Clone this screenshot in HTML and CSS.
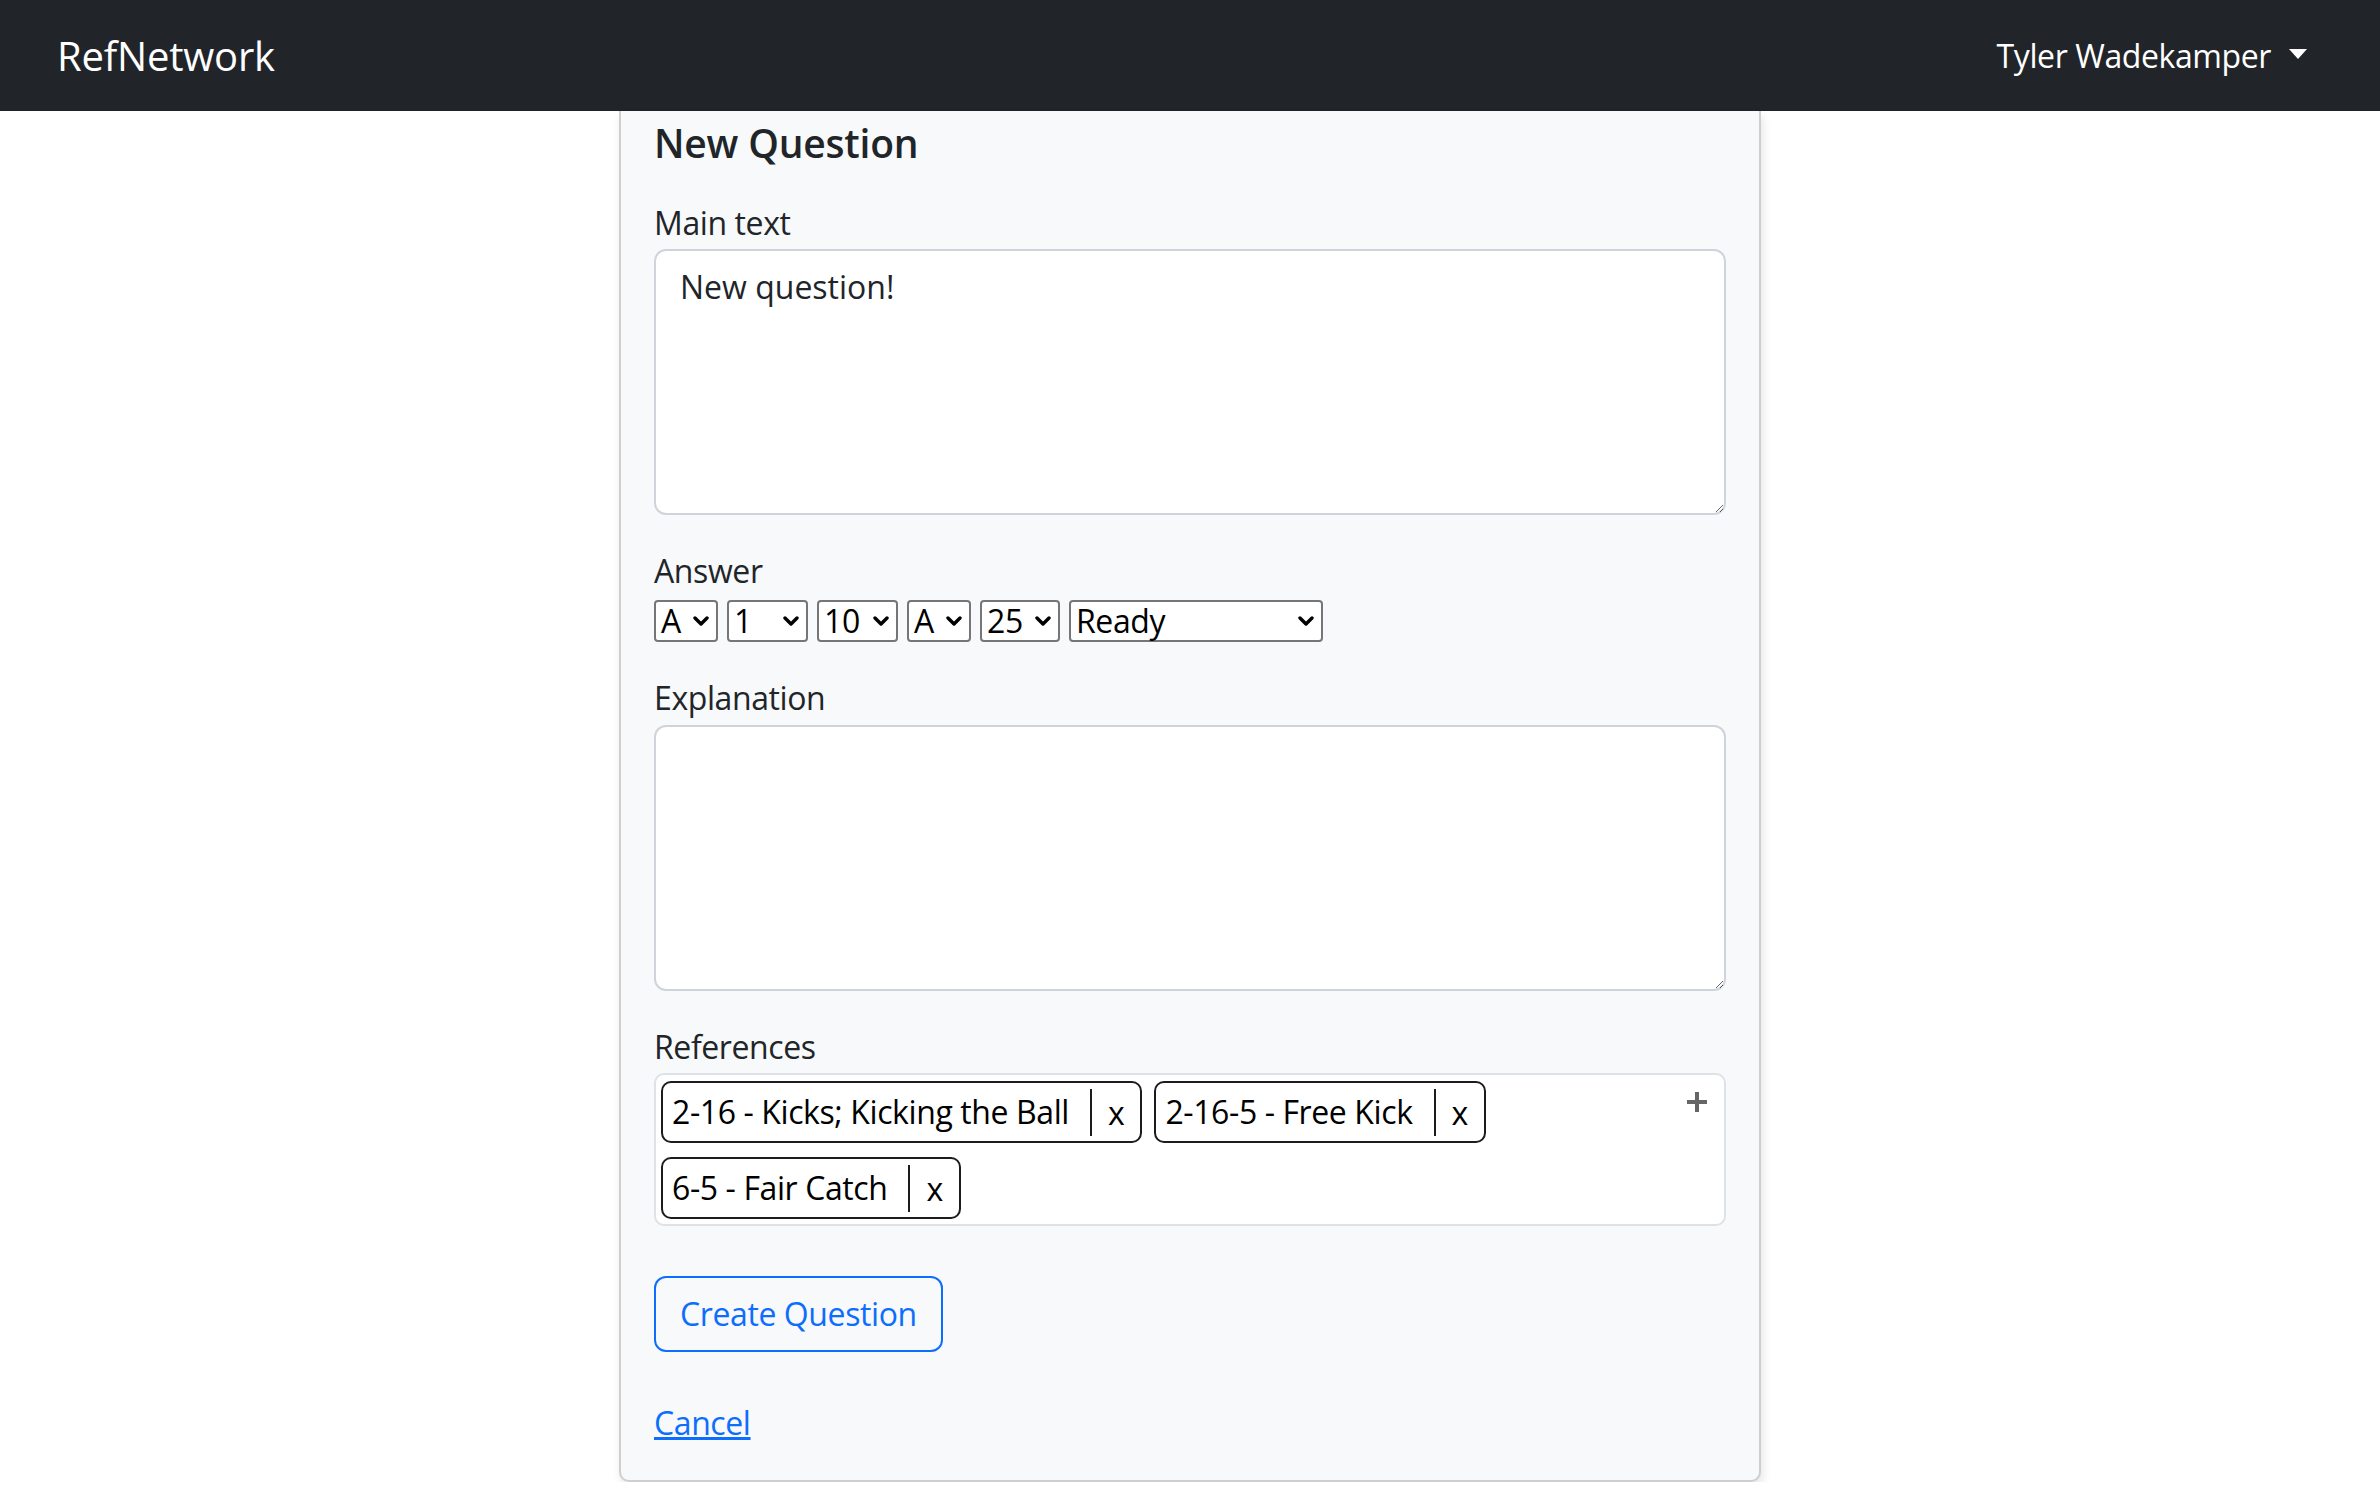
FILE: index.html
```html
<!DOCTYPE html>
<html lang="en">
<head>
<meta charset="utf-8">
<title>RefNetwork - New Question</title>
<link rel="stylesheet" href="styles.css">
</head>
<body>
<nav class="navbar">
  <a class="brand" href="#">RefNetwork</a>
  <div class="user">Tyler Wadekamper<span class="caret"></span></div>
</nav>
<main class="card">
  <h5 class="title">New Question</h5>
  <div class="group">
    <label class="lbl" for="main">Main text</label>
    <textarea id="main" class="field field-first">New question!</textarea>
  </div>
  <div class="group">
    <label class="lbl">Answer</label>
    <div class="selects">
      <div class="sel w-a"><span>A</span><svg class="chev" width="16" height="10" viewBox="0 0 16 10"><path d="M2 2 L8 8 L14 2" fill="none" stroke="#000" stroke-width="3.4" stroke-linecap="round" stroke-linejoin="round"/></svg></div>
      <div class="sel w-n"><span>1</span><svg class="chev" width="16" height="10" viewBox="0 0 16 10"><path d="M2 2 L8 8 L14 2" fill="none" stroke="#000" stroke-width="3.4" stroke-linecap="round" stroke-linejoin="round"/></svg></div>
      <div class="sel w-n"><span>10</span><svg class="chev" width="16" height="10" viewBox="0 0 16 10"><path d="M2 2 L8 8 L14 2" fill="none" stroke="#000" stroke-width="3.4" stroke-linecap="round" stroke-linejoin="round"/></svg></div>
      <div class="sel w-a"><span>A</span><svg class="chev" width="16" height="10" viewBox="0 0 16 10"><path d="M2 2 L8 8 L14 2" fill="none" stroke="#000" stroke-width="3.4" stroke-linecap="round" stroke-linejoin="round"/></svg></div>
      <div class="sel w-m"><span>25</span><svg class="chev" width="16" height="10" viewBox="0 0 16 10"><path d="M2 2 L8 8 L14 2" fill="none" stroke="#000" stroke-width="3.4" stroke-linecap="round" stroke-linejoin="round"/></svg></div>
      <div class="sel w-r"><span>Ready</span><svg class="chev" width="16" height="10" viewBox="0 0 16 10"><path d="M2 2 L8 8 L14 2" fill="none" stroke="#000" stroke-width="3.4" stroke-linecap="round" stroke-linejoin="round"/></svg></div>
    </div>
  </div>
  <div class="group">
    <label class="lbl" for="expl">Explanation</label>
    <textarea id="expl" class="field field-second"></textarea>
  </div>
  <div class="group group-refs">
    <label class="lbl">References</label>
    <div class="refs">
      <span class="tag"><span class="tag-text">2-16 - Kicks; Kicking the Ball</span><span class="tag-x">x</span></span>
      <span class="tag"><span class="tag-text">2-16-5 - Free Kick</span><span class="tag-x">x</span></span>
      <span class="tag"><span class="tag-text">6-5 - Fair Catch</span><span class="tag-x">x</span></span>
      <svg class="plus" width="20" height="20" viewBox="0 0 20 20"><path d="M10 0 V20 M0 10 H20" stroke="#666" stroke-width="4"/></svg>
    </div>
  </div>
  <button class="btn" type="button">Create Question</button>
  <p class="cancel"><a href="#">Cancel</a></p>
</main>
</body>
</html>
```
FILE: styles.css
```css
html, body {
  margin: 0;
  padding: 0;
}
body {
  font-family: "Open Sans", "Noto Sans", sans-serif;
  font-size: 32px;
  line-height: 1.5;
  letter-spacing: -0.4px;
  color: #212529;
  background: #fff;
}
.navbar {
  height: 111px;
  box-sizing: border-box;
  background: #212529;
  display: flex;
  align-items: center;
  justify-content: space-between;
  padding: 0 73px 0 57px;
}
.brand {
  font-size: 40px;
  line-height: 60px;
  letter-spacing: -0.2px;
  color: #fff;
  text-decoration: none;
}
.user {
  display: flex;
  align-items: center;
  color: #fff;
  font-size: 32px;
  line-height: 48px;
}
.caret {
  width: 0;
  height: 0;
  border-top: 10px solid #fff;
  border-left: 9.5px solid transparent;
  border-right: 9.5px solid transparent;
  margin-left: 18px;
  margin-top: -4px;
}
.card {
  width: 1142px;
  box-sizing: border-box;
  margin: 0 auto;
  background: #f8f9fa;
  border: 2px solid #cfcfcf;
  border-top: 0;
  border-radius: 0 0 10px 10px;
  padding: 8px 33px 33px;
  box-shadow: 2px 5px 10px rgba(0, 0, 0, 0.1);
}
.title {
  font-size: 39px;
  font-weight: 600;
  line-height: 48px;
  letter-spacing: -0.2px;
  margin: 0 0 32px;
  color: #212529;
}
.group {
  margin-bottom: 32px;
}
.lbl {
  display: block;
  line-height: 48px;
}
.field {
  display: block;
  width: 100%;
  height: 266px;
  box-sizing: border-box;
  border: 2px solid #ced4da;
  border-radius: 12px;
  padding: 12px 24px;
  font: inherit;
  line-height: 48px;
  color: #212529;
  background: #fff;
  resize: vertical;
  margin: 2px 0 0;
}
.field-second {
  margin-top: 3px;
}
.selects {
  display: flex;
  gap: 9px;
  margin-top: 5px;
}
.sel {
  display: flex;
  align-items: center;
  justify-content: space-between;
  height: 42px;
  box-sizing: border-box;
  border: 2px solid #767676;
  border-radius: 4px;
  background: #fff;
  padding: 0 7px 2px 5px;
  font-size: 32px;
  line-height: 37px;
  color: #000;
}
.chev {
  flex: none;
  margin-top: 2px;
}
.w-a { width: 64px; }
.w-n { width: 81px; }
.w-m { width: 80px; }
.w-r { width: 254px; }
.group-refs {
  margin-bottom: 50px;
}
.refs {
  position: relative;
  display: flex;
  flex-wrap: wrap;
  gap: 14px 12px;
  margin-top: 2px;
  border: 2px solid #dee2e6;
  border-radius: 10px;
  background: #fff;
  padding: 6px 60px 5px 5px;
}
.tag {
  display: inline-flex;
  align-items: center;
  border: 2px solid #1c1c1c;
  border-radius: 10px;
  background: #fff;
  padding: 5px 0;
  color: #000;
  line-height: 48px;
}
.tag-text {
  padding: 0 21px 0 9px;
  white-space: nowrap;
}
.tag-x {
  border-left: 2px solid #1c1c1c;
  padding: 0 16px;
  line-height: 47px;
}
.plus {
  position: absolute;
  top: 17px;
  right: 17px;
}
.btn {
  display: block;
  font: inherit;
  font-size: 32px;
  line-height: 48px;
  letter-spacing: -0.4px;
  color: #0d6efd;
  background: transparent;
  border: 2px solid #0d6efd;
  border-radius: 12px;
  padding: 12px 24px;
  margin: 0;
}
.cancel {
  margin: 47px 0 0;
  line-height: 48px;
}
.cancel a {
  color: #0d6efd;
  text-decoration: underline;
}
```
